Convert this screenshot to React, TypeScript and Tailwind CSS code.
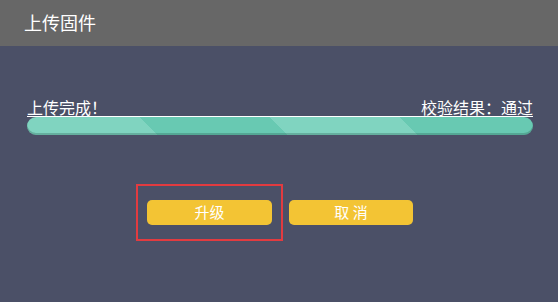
export default function App() {
  return (
    <div
      className="h-[302px] w-[558px] overflow-hidden bg-[#4b5067] text-white"
      style={{ fontFamily: '"Noto Sans CJK SC", "Noto Sans", sans-serif' }}
    >
      {/* Header */}
      <div className="flex h-[46px] items-center bg-[#676767] px-[24px] pb-[2px] text-[18px]">
        上传固件
      </div>

      {/* Status row + progress */}
      <div className="ml-[27px] mr-[25px] mt-[52px]">
        <div className="flex h-[19px] items-end justify-between border-b border-white text-[16px] leading-[18px]">
          <span>上传完成！</span>
          <span>校验结果：通过</span>
        </div>
        <div className="h-[18px] w-full rounded-full bg-[repeating-linear-gradient(45deg,#80d4c0_0px,#80d4c0_92px,#68c9b2_92px,#68c9b2_184px)] shadow-[inset_0_-2px_0_rgba(40,90,80,0.3)]" />
      </div>

      {/* Actions */}
      <div className="ml-[136px] mt-[49px] flex items-start gap-[6px]">
        <div className="border-2 border-[#e23b40] px-[9px] py-[14px]">
          <button className="flex h-[25px] w-[125px] items-center justify-center rounded-[5px] bg-[#f3c434] text-[15px] text-white">
            升级
          </button>
        </div>
        <button className="mt-[16px] flex h-[25px] w-[124px] items-center justify-center rounded-[5px] bg-[#f3c434] text-[15px] text-white">
          取 消
        </button>
      </div>
    </div>
  );
}
